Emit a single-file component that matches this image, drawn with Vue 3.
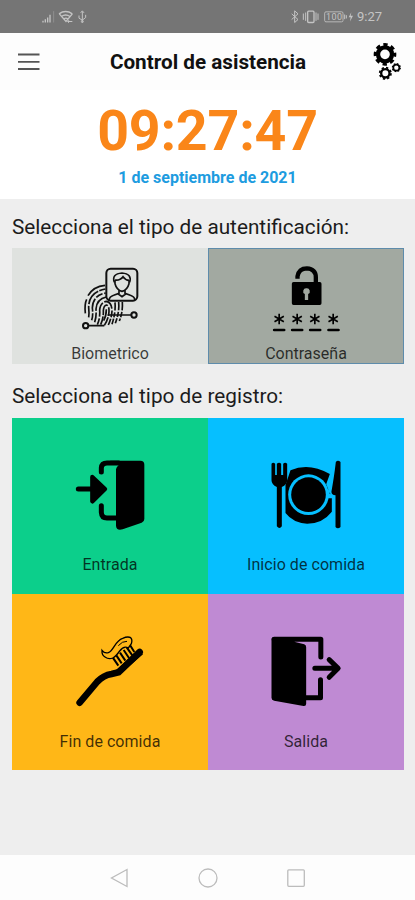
<template>
  <main class="phone">
    <!--Barra de estado-->
    <section class="status">
      <svg class="status-left" viewBox="120 25 150 50" width="50" height="17">
        <path d="M129 68v-5M136 68v-10M143 68V53M150 68V45" stroke-width="4" />
        <path d="M161 68V34" stroke-width="3" opacity=".35" />
        <path d="M177 42q20-14 40 0M184 50q13-9 26 0M178 42l20 23 19-23M192 57q6-4 11 0" stroke-width="4" />
        <path d="M203 65h14M207 61l-4 4 4 4" stroke-width="3" />
        <path d="M247 35v33M237 47v8l10 6 10-8v-8M242 39l5-6 5 6" stroke-width="3" />
        <circle cx="247" cy="65" r="3" stroke-width="3" />
      </svg>
      <svg class="status-right" viewBox="246 25 195 50" width="65" height="17">
        <path d="M254 42l19 17-10 9V33l10 9-19 17" stroke-width="3" />
        <path d="M289 41v19M296 38v25M327 38v25M333 41v19" stroke-width="3" />
        <rect x="302" y="34" width="19" height="34" rx="3" stroke-width="4" />
        <rect x="353" y="36" width="55" height="30" rx="4" stroke-width="2.5" />
        <path d="M413 44v14M418 46v10" stroke-width="3" />
        <path d="M433 37l-8 15h6l-2 13 9-17h-7z" class="fill" stroke="none" />
        <text x="357" y="61" textLength="48">100</text>
      </svg>
      <span class="hour">9:27</span>
    </section>

    <!--Cabecera-->
    <header>
      <svg class="burger" viewBox="0 0 22 18" width="22" height="18">
        <path d="M0 1.5h21.5M0 8.8h21.5M0 16h21.5" />
      </svg>
      <h1>Control de asistencia</h1>
      <svg class="gears" viewBox="495 124 90 120" width="30" height="40">
        <circle cx="534" cy="161" r="21" stroke-width="13" />
        <circle cx="534" cy="161" r="29.5" stroke-width="9" stroke-dasharray="13 10.17" stroke-dashoffset="6" />
        <circle cx="535" cy="218" r="12.5" stroke-width="7" />
        <circle cx="535" cy="218" r="17" stroke-width="5" stroke-dasharray="7 6.35" />
        <circle cx="568" cy="201" r="9" stroke-width="5" />
        <circle cx="568" cy="201" r="12" stroke-width="3.5" stroke-dasharray="5 4.42" />
      </svg>
    </header>

    <section class="clock">
      <time class="time">09:27:47</time>
      <p class="date">1 de septiembre de 2021</p>
    </section>

    <section class="content">
      <h2>Selecciona el tipo de autentificación:</h2>
      <div class="auth">
        <button
          v-for="item in authTypes"
          :key="item.id"
          :class="{ selected: item.id === auth }"
          @click="auth = item.id"
        >
          <!--Huella con retrato-->
          <svg v-if="item.id === 'bio'" class="line" viewBox="210 165 240 240" width="80" height="80">
            <g class="finger">
              <path d="M256 325q-3-28 4-42M264 272q16-28 51-31" />
              <path d="M266 337q2-12 0-30 0-45 50-55" stroke-dasharray="34 5 50 4" />
              <path d="M275 346q5-14 2-37 1-38 40-45" stroke-dasharray="22 5 40 5" />
              <path d="M284 352q6-18 4-40 2-30 31-36" stroke-dasharray="30 5 60 5" />
              <path d="M292 359q9-20 7-44 2-23 20-26 17 3 17 29-1 20-11 42" stroke-dasharray="20 5 44 5 36 5" />
              <path d="M302 359q9-20 8-42 1-15 9-17 9 2 8 19-1 22-14 42" stroke-dasharray="26 4 38 5" />
              <path d="M345 292q3 28-9 66M356 291q3 29-10 64M367 291q2 30-9 57" stroke-dasharray="25 5 16 4" />
              <path d="M319 313q0 20-8 34" />
            </g>
            <rect x="319" y="191" width="93" height="96" rx="13" stroke-width="6" />
            <path d="M327 285q2-10 14-14l16-6v-9M405 285q-2-10-14-14l-16-6v-9M355 267l11 8 11-8" stroke-width="5" />
            <path d="M343 232q-9-25 23-28 31 3 23 28M345 225q15 2 24-10 7 10 18 11M345 226v10q5 19 21 23 16-4 21-23v-10" stroke-width="5" />
            <path d="M323 330h70M265 362h48" stroke-width="5" />
            <circle cx="402" cy="330" r="8" stroke-width="6" />
            <circle cx="257" cy="362" r="8" stroke-width="6" />
          </svg>

          <!--Candado con asteriscos-->
          <svg v-else viewBox="181.5 165 240 240" width="80" height="80">
            <path d="M276 221v-7q4-24 28-24 27 2 27 27v16" class="stroke" stroke-width="13" />
            <path
              fill-rule="evenodd"
              d="M264 231h79q5 0 5 5v59q0 5-5 5h-79q-5 0-5-5v-59q0-5 5-5zM303 250a9 9 0 0 0-5 17v18h10v-18a9 9 0 0 0-5-17z"
            />
            <path
              v-for="x in [221, 275, 328, 383]"
              :key="x"
              :d="`M${x} 326v32M${x - 14} 334l28 16M${x - 14} 350l28-16`"
              class="stroke"
              stroke-width="5"
            />
            <path d="M206 375h30M260 375h30M314 375h30M369 375h30" class="stroke round" stroke-width="8" />
          </svg>
          <span>{{ item.label }}</span>
        </button>
      </div>

      <h2 class="second">Selecciona el tipo de registro:</h2>
      <div class="records">
        <button class="green">
          <svg viewBox="30 45 240 240" width="80" height="80">
            <path d="M124 96V84q1-15 17-15h35M124 197v20q1 17 17 17h35" class="stroke round" stroke-width="15" />
            <path d="M150 62h91q12 0 12 12v163q0 8-8 11l-57 20q-19 5-20-11V88q0-6 8-12z" />
            <path d="M55 147h42" class="stroke round" stroke-width="15" />
            <path d="M97 111l38 36-38 37z" class="stroke join" fill="#000" stroke-width="13" />
          </svg>
          <span>Entrada</span>
        </button>

        <button class="blue">
          <svg viewBox="76.5 45 240 240" width="80" height="80">
            <path d="M150 91q55-25 118 11l-11 31 17 39v43q-28 36-74 36-42-2-65-32v-84z" />
            <circle cx="204" cy="164" r="61" fill="#06bfff" />
            <circle cx="204" cy="164" r="52" />
            <path d="M262 158l14 7v10h-14zM259 165l18-66h6l-17 66z" fill="#06bfff" />
            <path
              d="M93 71q5-6 11 0v34h5V71q7-6 13 0v34h6V71q6-6 12 0v50q0 13-16 20v118q-7 10-15 0V141q-16-7-16-20z"
            />
            <path d="M300 66q-8-7-14 0c-4 35-9 65-13 88-1 7 3 11 12 12v95q7 8 15 0z" />
          </svg>
          <span>Inicio de comida</span>
        </button>

        <button class="yellow">
          <svg viewBox="60 33 240 240" width="80" height="80">
            <path d="M89 248l53-63q18-19 43-23l21-5 63-61" class="stroke round" stroke-width="20" />
            <path d="M191 163l26-6 62-54-14-13-66 59-20 6z" />
            <path
              d="M188 112l17 25M199 106l16 24M210 98l16 24M221 90l16 24M230 82l17 24M238 72l15 24"
              class="stroke"
              stroke-width="6"
            />
            <path
              d="M188 114q-12 5-23-3-10-6-9-20 7 10 19 7c17-7 19-35 43-43 9-4 17-6 24-2q6 6 2 18l-9 13q-13-8-26 9-12 17-21 21z"
              class="paste"
            />
            <path d="M205 77q12-14 26-13" class="stroke" stroke-width="3" />
          </svg>
          <span>Fin de comida</span>
        </button>

        <button class="purple">
          <svg viewBox="76.5 33 240 240" width="80" height="80">
            <path d="M101 58h140v53M240 179v54h-50" class="stroke round join" stroke-width="15" />
            <path d="M101 51h50l13 15 27 7q6 2 6 9v169q0 8-8 7l-88-16q-8-2-8-9V59q0-8 8-8z" />
            <path d="M223 145h68M266 119l27 26-27 27" class="stroke round join" stroke-width="15" />
          </svg>
          <span>Salida</span>
        </button>
      </div>
    </section>

    <!--Barra de navegación-->
    <nav>
      <svg viewBox="0 0 20 20" width="20" height="20"><path d="M17 1.5v17L1.5 10z" /></svg>
      <svg viewBox="0 0 20 20" width="20" height="20"><circle cx="10" cy="10" r="9" /></svg>
      <svg viewBox="0 0 20 20" width="20" height="20">
        <rect x="1.8" y="1.8" width="16.5" height="16.5" rx="1" />
      </svg>
    </nav>
  </main>
</template>

<script setup>
import { ref } from 'vue'

const auth = ref('password')

const authTypes = [
  { id: 'bio', label: 'Biometrico' },
  { id: 'password', label: 'Contraseña' }
]
</script>

<style>
body {
  margin: 0;
}
</style>

<style scoped>
* {
  margin: 0;
  padding: 0;
  box-sizing: border-box;
  font-family: Roboto, Arial, sans-serif;
}

.phone {
  width: 415px;
  height: 900px;
  display: flex;
  flex-direction: column;
  background-color: #eeeeee;
  overflow: hidden;
}

svg {
  display: block;
  flex: none;
}

.status {
  height: 33px;
  display: flex;
  align-items: center;
  padding: 0 33px 0 40px;
  background-color: #757575;
  color: #c4c4c4;
}

.status svg {
  fill: none;
  stroke: #c4c4c4;
}

.status text {
  font-size: 27px;
  fill: #c4c4c4;
  stroke: none;
}

.status .fill {
  fill: #c4c4c4;
}

.status-right {
  margin-left: auto;
}

.hour {
  width: 25px;
  margin-left: 3px;
  font-size: 13px;
  line-height: 17px;
}

header {
  height: 57px;
  display: flex;
  align-items: center;
  padding: 0 13px 0 18px;
  background-color: #fdfdfd;
}

.burger {
  stroke: #555;
  stroke-width: 1.8;
}

h1 {
  flex: 1;
  padding-left: 4px;
  font-size: 20.7px;
  line-height: 24px;
  font-weight: 700;
  text-align: center;
  color: #111;
}

.gears {
  fill: none;
  stroke: #000;
}

.clock {
  height: 109px;
  padding-top: 9px;
  background-color: #fff;
  text-align: center;
}

.time {
  display: block;
  font-size: 55.5px;
  line-height: 66px;
  font-weight: 700;
  letter-spacing: -0.2px;
  color: #fa8619;
}

.date {
  margin-top: 3px;
  font-size: 16px;
  line-height: 19px;
  font-weight: 700;
  color: #1d9ce0;
}

.content {
  flex: 1;
  padding: 16px 11px 0 12px;
}

h2 {
  font-size: 20.75px;
  line-height: 24px;
  font-weight: 400;
  color: #1c1c1c;
  white-space: nowrap;
}

.auth {
  display: grid;
  grid-template-columns: 196px 196px;
  margin-top: 8px;
}

button {
  display: flex;
  flex-direction: column;
  align-items: center;
  border: none;
  color: rgba(0, 0, 0, 0.75);
  font-size: 16px;
  line-height: 19px;
  cursor: pointer;
}

.auth {
  margin-top: 9px;
}

.auth button {
  height: 116px;
  padding-top: 11px;
  border: 1px solid #dfe2df;
  background-color: #dfe2df;
}

.auth button span {
  margin-top: 4px;
}

.auth .selected {
  background-color: #a2a9a1;
  border-color: #5e8cab;
}

.second {
  margin-top: 20px;
}

.records {
  display: grid;
  grid-template-columns: 196px 196px;
  grid-auto-rows: 176px;
  margin-top: 10px;
}

.records button {
  padding-top: 37px;
}

.records span {
  margin-top: 20px;
  letter-spacing: 0.05px;
}

.green {
  background-color: #0ccf8b;
}

.blue {
  background-color: #06bfff;
}

.yellow {
  background-color: #ffb717;
}

.purple {
  background-color: #bf8ad3;
}

.records .yellow span,
.records .purple span {
  margin-top: 21px;
}

.stroke {
  fill: none;
  stroke: #000;
}

.stroke[fill] {
  fill: #000;
}

.paste {
  fill: #ffb717;
  stroke: #000;
  stroke-width: 4px;
}

.round {
  stroke-linecap: round;
}

.join {
  stroke-linejoin: round;
}

.line {
  fill: none;
  stroke: #111;
}

.finger {
  stroke-width: 5;
}

nav {
  height: 45px;
  display: flex;
  justify-content: center;
  align-items: center;
  gap: 68px;
  background-color: #fdfdfd;
}

nav svg {
  fill: none;
  stroke: #bcbcbc;
  stroke-width: 1.3;
}
</style>
